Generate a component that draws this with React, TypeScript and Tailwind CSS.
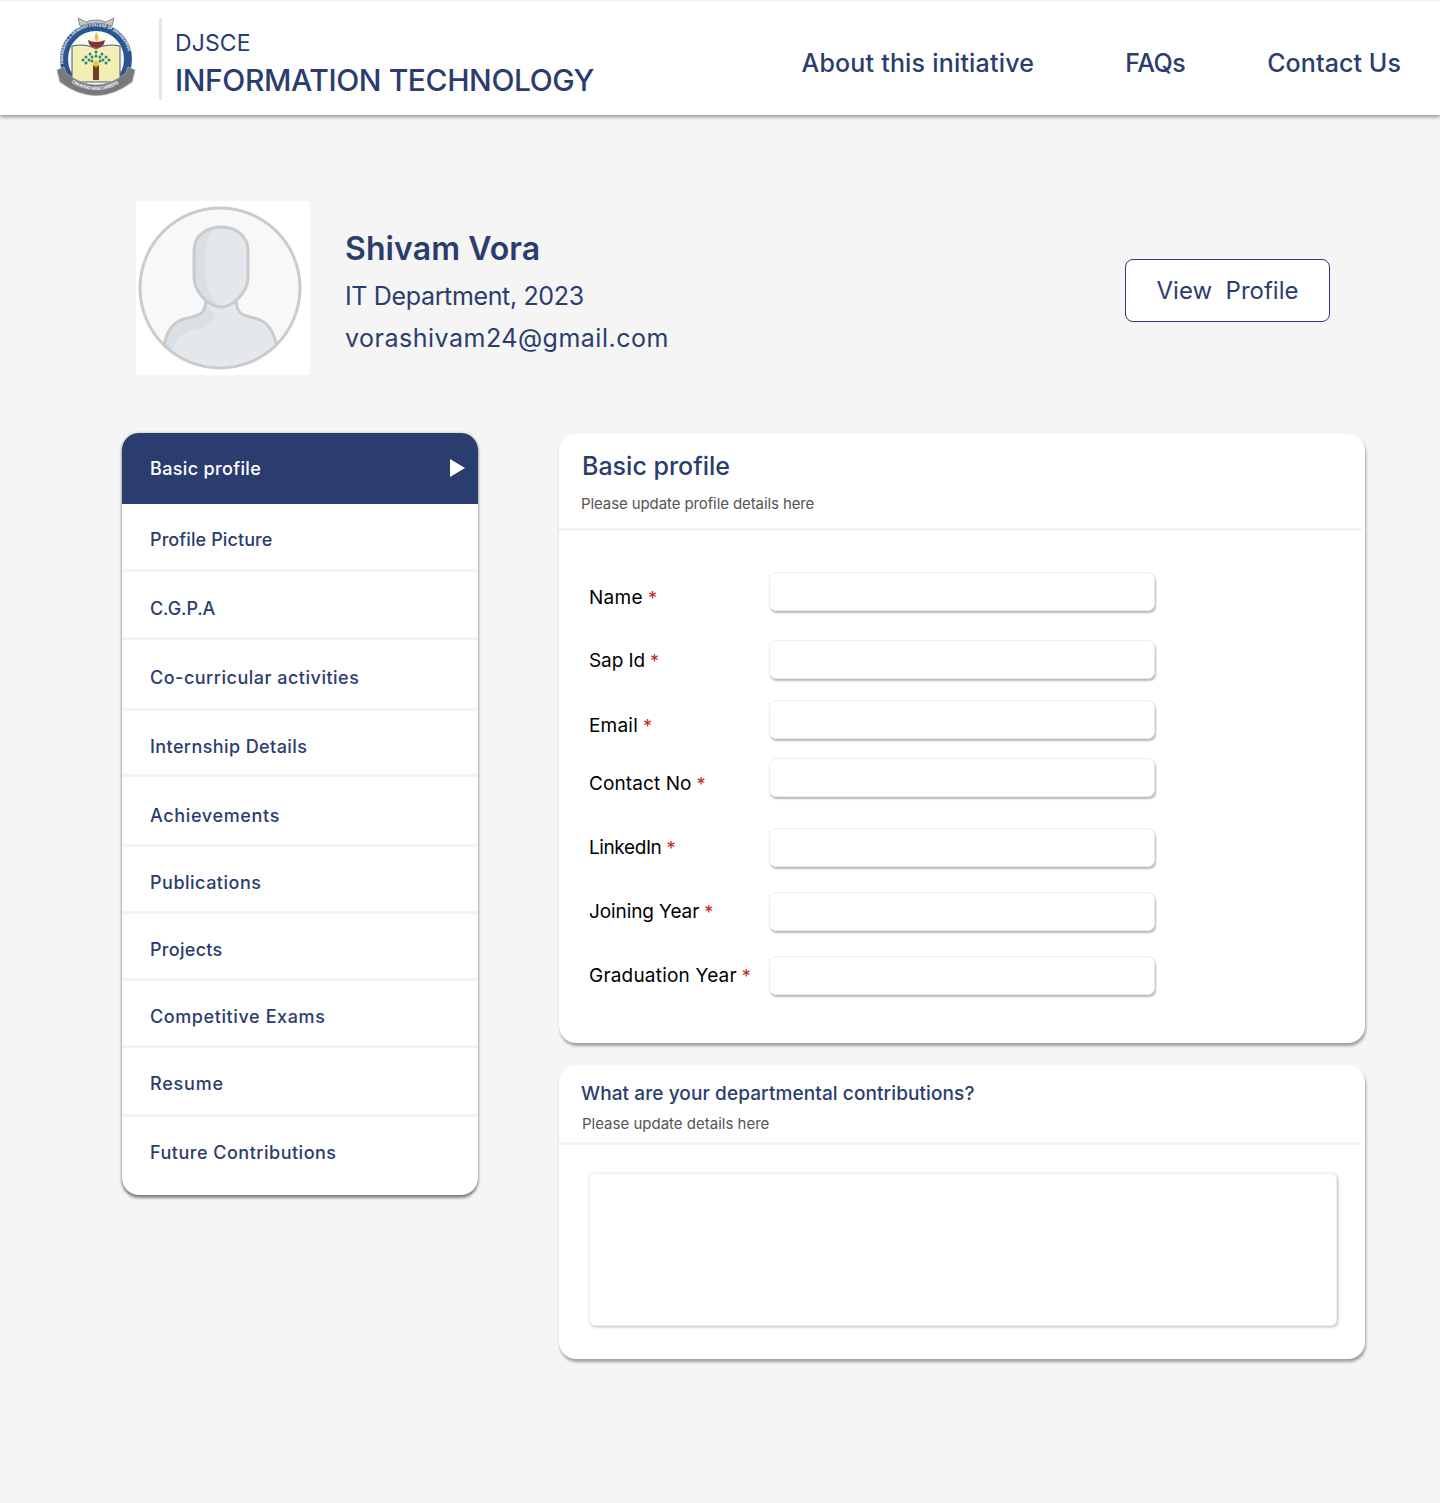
import React from 'react';

const menuItems = [
  { label: 'Profile Picture', row: 'h-[68px] pt-[5px] border-b-[3px] tracking-[0.1px]' },
  { label: 'C.G.P.A', row: 'h-[68px] pt-[7px] border-b-[3px] tracking-[-0.1px]' },
  { label: 'Co-curricular activities', row: 'h-[71px] pt-[6px] border-b-[3px] tracking-[0.5px]' },
  { label: 'Internship Details', row: 'h-[66px] pt-[7px] border-b-[3px] tracking-[0.4px]' },
  { label: 'Achievements', row: 'h-[70px] pt-[9px] border-b-[3px] tracking-[0.65px]' },
  { label: 'Publications', row: 'h-[67px] pt-[6px] border-b-[3px] tracking-[0.5px]' },
  { label: 'Projects', row: 'h-[67px] pt-[6px] border-b-[3px] tracking-[0.3px]' },
  { label: 'Competitive Exams', row: 'h-[67px] pt-[6px] border-b-[3px] tracking-[0.6px]' },
  { label: 'Resume', row: 'h-[69px] pt-[4px] border-b-[3px] tracking-[0.8px]' },
  { label: 'Future Contributions', row: 'h-[78px] pb-[8px] tracking-[0.5px]' },
];

const fields = [
  { label: 'Name', row: 'mt-0', text: 'pt-[14px] tracking-[0.3px]' },
  { label: 'Sap Id', row: 'mt-[29px]', text: 'pt-[4px] tracking-[-0.1px]' },
  { label: 'Email', row: 'mt-[21px]', text: 'pt-[14px] tracking-[0.2px]' },
  { label: 'Contact No', row: 'mt-[19px]', text: 'pt-[14px] tracking-[0.1px]' },
  { label: 'LinkedIn', row: 'mt-[31px]', text: 'pt-[2px] tracking-[-0.4px]' },
  { label: 'Joining Year', row: 'mt-[25px]', text: 'pt-[2px] tracking-[-0.1px]' },
  { label: 'Graduation Year', row: 'mt-[25px]', text: 'pt-[2px] tracking-[0.2px]' },
];

function CollegeLogo() {
  return (
    <svg width="80" height="84" viewBox="0 0 80 84" className="shrink-0 self-start mt-[13px]">
      <defs>
        <path id="crest-arc" d="M7.500 50 A33 33 0 1 1 72.500 50" />
        <path id="ribbon-arc" d="M10 64 Q40 86 70 64" />
      </defs>
      <circle cx="40" cy="44" r="32" fill="#fbfbf6" stroke="#2a5590" strokeWidth="8" />
      <path d="M22 3 L30 7 Q40 3 50 7 L58 3 L56 11 Q40 5 24 11 Z" fill="#c9c9c4" stroke="#6f7172" strokeWidth="0.8" />
      <text fontFamily="Inter, sans-serif" fontSize="4" fontWeight="700" fill="#f2f2ea">
        <textPath href="#crest-arc" startOffset="1%" textLength="100">DWARKADAS J. SANGHVI COLLEGE OF ENGINEERING</textPath>
      </text>
      <path d="M32 25 Q40 29 49 25 Q48 33 40.500 33 Q33 33 32 25 Z" fill="#8f2f2c" />
      <path d="M40.500 17 Q44 23 40.500 27 Q37 23 40.500 17 Z" fill="#eebb47" />
      <path d="M16 31 Q30 28 40 34 Q50 28 64 31 L64 67 L16 67 Z" fill="#f3edb6" stroke="#3b5d87" strokeWidth="1" />
      <path d="M40 34 L40 67" stroke="#d3cb88" strokeWidth="0.8" />
      <rect x="37" y="50" width="6" height="15" fill="#6b4322" />
      <circle cx="40" cy="49" r="2.800" fill="#edc53d" />
      <g fill="#2d8a6d">
        <circle cx="27" cy="45" r="1.500" /><circle cx="30" cy="42" r="1.500" /><circle cx="34" cy="39" r="1.500" />
        <circle cx="40" cy="37" r="1.500" /><circle cx="46" cy="39" r="1.500" /><circle cx="50" cy="42" r="1.500" />
        <circle cx="53" cy="45" r="1.500" /><circle cx="33" cy="45" r="1.500" /><circle cx="36" cy="42" r="1.500" />
        <circle cx="40" cy="41" r="1.500" /><circle cx="44" cy="42" r="1.500" /><circle cx="47" cy="45" r="1.500" />
        <circle cx="30" cy="48" r="1.500" /><circle cx="50" cy="48" r="1.500" /><circle cx="36" cy="46" r="1.500" /><circle cx="44" cy="46" r="1.500" />
      </g>
      <path d="M1 55 L8 52 L10 58 Q40 82 70 58 L72 52 L79 55 L76 67 Q40 94 4 67 Z" fill="#77797b" stroke="#a2a4a4" strokeWidth="0.8" />
      <text fontFamily="Inter, sans-serif" fontSize="4.500" fontWeight="700" fill="#f1f1ee">
        <textPath href="#ribbon-arc" startOffset="10%" textLength="50">CREATING WISE CAREERS</textPath>
      </text>
    </svg>
  );
}

function Avatar() {
  const head = 'M85 26 C100 26 112 35 112 50 L112 76 C112 90 98 106 85 106 C72 106 58 90 58 76 L58 50 C58 35 70 26 85 26 Z';
  const body = 'M70 95 C70 112 66 114 52 117 C36 120 30 130 27 150 L27 175 L142 175 L142 150 C138 130 132 120 118 117 C104 114 100 112 100 95 Z';
  return (
    <div className="w-[174px] h-[174px] bg-white shrink-0">
      <svg width="174" height="174" viewBox="0 0 174 174">
        <defs>
          <clipPath id="avatar-clip">
            <circle cx="84" cy="87" r="80" />
          </clipPath>
        </defs>
        <circle cx="84" cy="87" r="80" fill="#f8f8f8" />
        <g clipPath="url(#avatar-clip)">
          <path d={body} fill="#e4e8ec" />
          <path d="M70 105 C70 114 64 116 52 118 C38 121 31 130 28 150 L36 160 C36 144 40 134 54 130 C68 127 78 124 79 112 Z" fill="#d8dfe5" />
          <path d={body} fill="none" stroke="#c9cbcc" strokeWidth="3" />
        </g>
        <path d={head} fill="#e4e8ec" />
        <path d="M80 27 C68 29 58.500 38 58.500 50 L58.500 76 C58.500 90 72 105 85 105 C76 100 70 88 70 74 L70 50 C70 40 74 32 80 27 Z" fill="#d8dfe5" />
        <path d={head} fill="none" stroke="#c9cbcc" strokeWidth="3" />
        <circle cx="84" cy="87" r="80" fill="none" stroke="#cbcbcb" strokeWidth="3" />
      </svg>
    </div>
  );
}

function FormInput() {
  return (
    <div className="h-[39px] w-[386px] rounded-[7px] bg-white border border-[#ededed] shadow-[1px_2px_2px_rgba(0,0,0,0.28)]" />
  );
}

export default function App() {
  return (
    <div className="min-h-[1503px] bg-[#f5f5f5] font-['Inter',sans-serif] text-[#2b3d6e]">
      <header className="h-[115px] bg-white border-t-[2px] border-[#f5f5f5] shadow-[0_2px_4px_rgba(0,0,0,0.4)] flex items-center pl-[56px] pr-[39px]">
        <CollegeLogo />
        <div className="w-[3px] h-[82px] bg-[#e6e6e6] ml-[23px]" />
        <div className="ml-[13px] pt-[11px]">
          <div className="text-[23px] leading-[30px] tracking-[0.1px]">DJSCE</div>
          <div className="mt-[2px] text-[30px] leading-[40px] font-medium tracking-[-0.4px]">INFORMATION TECHNOLOGY</div>
        </div>
        <nav className="ml-auto pt-[11px] flex items-center text-[25px] font-medium">
          <a className="tracking-[0.2px]">About this initiative</a>
          <a className="ml-[91px] tracking-[-0.5px]">FAQs</a>
          <a className="ml-[82px] tracking-[0.1px]">Contact Us</a>
        </nav>
      </header>

      <section className="mt-[86px] ml-[136px] mr-[110px] flex items-center">
        <Avatar />
        <div className="ml-[35px] pt-[11px]">
          <div className="text-[32px] leading-[40px] font-semibold tracking-[0.1px]">Shivam Vora</div>
          <div className="mt-[6px] text-[25px] leading-[42px] tracking-[-0.35px]">IT Department, 2023</div>
          <div className="text-[25px] leading-[42px] tracking-[0.5px]">vorashivam24@gmail.com</div>
        </div>
        <button className="ml-auto mt-[4px] pt-[2px] w-[205px] h-[63px] rounded-[8px] border border-[#2b3d6e] bg-white text-[24px] whitespace-pre">
          View  Profile
        </button>
      </section>

      <main className="mt-[58px] ml-[122px] mr-[75px] flex items-start">
        <aside className="w-[356px] rounded-[17px] bg-white overflow-hidden shadow-[0_3px_3px_rgba(0,0,0,0.45),0_0_3px_rgba(0,0,0,0.25)]">
          <div className="h-[71px] bg-[#2b3d6e] text-white flex items-center justify-between pl-[28px] pr-[13px]">
            <span className="-mt-[1px] text-[18px] tracking-[0.35px] font-medium">Basic profile</span>
            <svg width="15" height="18" viewBox="0 0 15 18" className="-mt-[1px]">
              <path d="M0 0 L15 9 L0 18 Z" fill="#ffffff" />
            </svg>
          </div>
          {menuItems.map((item) => (
            <div key={item.label} className={`${item.row} border-[#f0f3f8] flex items-center pl-[28px] text-[18px] font-medium box-border`}>
              {item.label}
            </div>
          ))}
        </aside>

        <div className="ml-[81px] w-[806px]">
          <div className="mt-[1px] h-[609px] rounded-[17px] bg-white shadow-[1px_3px_3px_rgba(0,0,0,0.35)]">
            <div className="h-[97px] mr-[4px] border-b-[3px] border-[#f0f3f8] pl-[23px] pt-[15px]">
              <div className="text-[25px] leading-[34px] font-medium">Basic profile</div>
              <div className="mt-[11px] -ml-[1px] text-[15px] leading-[20px] tracking-[-0.1px] text-[#555]">Please update profile details here</div>
            </div>
            <div className="mt-[41px] pl-[30px]">
              {fields.map((field) => (
                <div key={field.label} className={`${field.row} h-[39px] flex`}>
                  <label className={`${field.text} w-[180px] flex items-center text-[19px] text-black`}>
                    {field.label}
                    <span className="ml-[5px] text-[18px] leading-none tracking-normal text-[#c0272d]">*</span>
                  </label>
                  <FormInput />
                </div>
              ))}
            </div>
          </div>

          <div className="mt-[22px] h-[294px] rounded-[17px] bg-white shadow-[1px_3px_3px_rgba(0,0,0,0.35)]">
            <div className="h-[80px] mr-[4px] border-b-[3px] border-[#f0f3f8] pl-[22px] pt-[16px]">
              <div className="text-[19px] leading-[26px] tracking-[0.1px] font-medium">What are your departmental contributions?</div>
              <div className="mt-[7px] ml-[1px] text-[15px] leading-[20px] text-[#555]">Please update details here</div>
            </div>
            <div className="mt-[28px] ml-[30px] w-[748px] h-[153px] rounded-[6px] bg-white border border-[#f0f0f0] shadow-[1px_1px_3px_rgba(0,0,0,0.28)]" />
          </div>
        </div>
      </main>
    </div>
  );
}
